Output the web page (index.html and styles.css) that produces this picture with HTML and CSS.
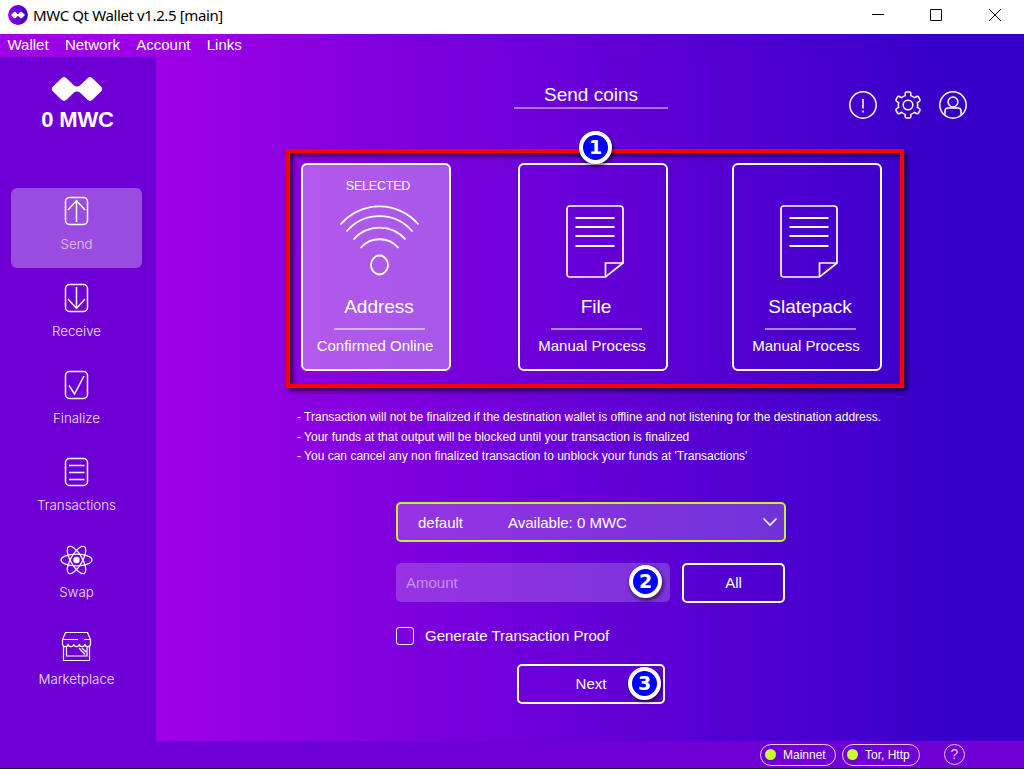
FILE: index.html
```html
<!DOCTYPE html>
<html lang="en">
<head>
<meta charset="utf-8">
<title>MWC Qt Wallet</title>
<link rel="stylesheet" href="styles.css">
</head>
<body>
<svg class="defs" width="0" height="0" aria-hidden="true">
  <defs>
    <linearGradient id="brand" x1="0" x2="1"><stop offset="0" stop-color="#9700e4"/><stop offset="1" stop-color="#3600c9"/></linearGradient>
    <symbol id="doc" viewBox="0 0 58 73">
      <path d="M4 1h50q3 0 3 3v54L39.500 72H4q-3 0-3-3V4q0-3 3-3z" stroke-width="1.700"/>
      <path d="M39.500 71V58H57" stroke-width="1.700"/>
      <path d="M9.500 13h39M9.500 22h39M9.500 31h39M9.500 41h39" stroke-width="1.900"/>
    </symbol>
  </defs>
</svg>
<div class="window">
  <header class="titlebar">
    <svg class="app-icon" viewBox="0 0 20 20" width="20" height="20"><circle cx="10" cy="10" r="9.900" fill="url(#brand)"/><path d="M3 10l3-3q.8-.7 1.600 0L10 9.200l2.400-2.200q.8-.7 1.600 0l3 3-3 3q-.8.700-1.600 0L10 10.800 7.600 13q-.8.700-1.600 0z" fill="#fff"/></svg>
    <span class="window-title">MWC Qt Wallet v1.2.5 [main]</span>
    <svg class="window-controls" viewBox="0 0 130 14" width="130" height="14"><path d="M0 6.500h12M58.500 1.500h11v11h-11zM117 1l12 12M129 1l-12 12"/></svg>
  </header>
  <nav class="menubar"><span>Wallet</span><span>Network</span><span>Account</span><span>Links</span></nav>
  <div class="body">
    <aside class="sidebar">
      <svg class="logo" viewBox="0 0 52 26" width="52" height="26"><path d="M1.500 11L10.500 2.200Q13 0 15.500 2.200L23 9.500Q26 11.500 29 9.500L36.500 2.200Q39 0 41.500 2.200L50.500 11Q52 13 50.500 15L41.500 23.800Q39 26 36.500 23.800L29 16.500Q26 14.500 23 16.500L15.500 23.800Q13 26 10.500 23.800L1.500 15Q0 13 1.500 11z" fill="#fff"/></svg>
      <div class="balance">0 MWC</div>
      <div class="nav">
        <div class="nav-item active">
          <svg viewBox="0 0 34 32" width="34" height="32"><rect x="5.500" y="2.500" width="22" height="27" rx="4"/><path d="M16.500 27V6M8 15l8.500-9.500L25 15"/></svg>
          <span class="label">Send</span>
        </div>
        <div class="nav-item">
          <svg viewBox="0 0 34 32" width="34" height="32"><rect x="5.500" y="2.500" width="22" height="27" rx="4"/><path d="M16.500 5v21M8 17l8.500 9.500L25 17"/></svg>
          <span class="label">Receive</span>
        </div>
        <div class="nav-item">
          <svg viewBox="0 0 34 32" width="34" height="32"><rect x="5.500" y="2.500" width="22" height="27" rx="4"/><path d="M9 16.500l5.500 8.500L24 7"/></svg>
          <span class="label">Finalize</span>
        </div>
        <div class="nav-item">
          <svg viewBox="0 0 34 32" width="34" height="32"><rect x="5.500" y="2.500" width="22" height="27" rx="4"/><path d="M9 9.500h15.500M9 16.500h15.500M9 23.500h15.500"/></svg>
          <span class="label">Transactions</span>
        </div>
        <div class="nav-item">
          <svg class="atom" viewBox="0 0 34 32" width="34" height="32"><g transform="translate(16.500 17)"><ellipse rx="15.500" ry="5.800"/><ellipse rx="15.500" ry="5.800" transform="rotate(60)"/><ellipse rx="15.500" ry="5.800" transform="rotate(120)"/><circle r="3.200" fill="#fff" stroke="none"/></g></svg>
          <span class="label">Swap</span>
        </div>
        <div class="nav-item">
          <svg class="shop" viewBox="0 0 34 32" width="34" height="32"><path d="M5.500 2.500h22l3 7v4.500a2.800 2.600 0 0 1-5.600 0a2.800 2.600 0 0 1-5.600 0a2.800 2.600 0 0 1-5.600 0a2.800 2.600 0 0 1-5.600 0a2.800 2.600 0 0 1-5.600 0V9.500zM2.500 9.500H18M24 9.500h6.500M3.500 16.500v14h26v-14M6.500 17v9h20.500v-9M19 18l6 6.500M22 18l4 4"/></svg>
          <span class="label">Marketplace</span>
        </div>
      </div>
    </aside>
    <main class="content">
      <div class="page-head">
        <h1 class="page-title">Send coins</h1>
        <div class="tools">
          <svg viewBox="0 0 28 28" width="28" height="28"><circle cx="14" cy="14" r="13.200"/><path d="M14 8v9.500M14 19.500v2" stroke-width="1.500"/></svg>
          <svg viewBox="0 0 28 28" width="28" height="28"><circle cx="14" cy="14" r="4.800"/><path d="M11.200 4.600V2.300q0-1.300 1.300-1.300h3q1.300 0 1.300 1.300v2.300q2 .6 3.700 2.100l2.100-1.200q1.200-.6 1.900.5l1.400 2.400q.6 1.200-.5 1.900l-2 1.200q.5 2.500 0 5l2 1.200q1.100.7.500 1.900l-1.400 2.400q-.7 1.100-1.900.5l-2.100-1.200q-1.700 1.500-3.700 2.100v2.300q0 1.300-1.300 1.300h-3q-1.300 0-1.300-1.300v-2.300q-2-.6-3.700-2.100l-2.100 1.200q-1.200.6-1.900-.5l-1.400-2.400q-.6-1.200.5-1.900l2-1.200q-.5-2.500 0-5l-2-1.200q-1.100-.7-.5-1.900L3.500 6q.7-1.100 1.900-.5l2.100 1.200q1.700-1.500 3.700-2.100z"/></svg>
          <svg viewBox="0 0 28 28" width="28" height="28"><circle cx="14" cy="14" r="13.200"/><circle cx="14" cy="11" r="4.900"/><path d="M6 23.500V20q0-3 3-3h10q3 0 3 3v3.500"/></svg>
        </div>
      </div>
      <section class="methods">
        <span class="badge badge-one">1</span>
        <article class="card selected">
          <div class="state">SELECTED</div>
          <svg class="card-icon" viewBox="0 0 80 73" width="80" height="73"><path d="M1.500 19.500A51 51 0 0 1 79.500 19.500M7.500 26.500A43 43 0 0 1 73.500 26.500M14.500 34.500A34.500 34.500 0 0 1 66.500 34.500M21.500 43A25 25 0 0 1 59.500 43"/><ellipse cx="40.500" cy="60" rx="8.500" ry="9.500"/></svg>
          <h2 class="card-name">Address</h2>
          <div class="card-note">Confirmed Online</div>
        </article>
        <article class="card">
          <div class="state"></div>
          <svg class="card-icon doc" width="58" height="73"><use href="#doc"/></svg>
          <h2 class="card-name">File</h2>
          <div class="card-note">Manual Process</div>
        </article>
        <article class="card">
          <div class="state"></div>
          <svg class="card-icon doc" width="58" height="73"><use href="#doc"/></svg>
          <h2 class="card-name">Slatepack</h2>
          <div class="card-note">Manual Process</div>
        </article>
      </section>
      <div class="hints">
        <p>- Transaction will not be finalized if the destination wallet is offline and not listening for the destination address.</p>
        <p>- Your funds at that output will be blocked until your transaction is finalized</p>
        <p>- You can cancel any non finalized transaction to unblock your funds at 'Transactions'</p>
      </div>
      <form class="form">
        <div class="account"><span class="account-name">default</span><span>Available: 0 MWC</span>
          <svg viewBox="0 0 16 10" width="16" height="10"><path d="M1.500 1.500L8 8l6.500-6.500"/></svg>
        </div>
        <div class="amount-row">
          <div class="amount">Amount<span class="badge badge-two">2</span></div>
          <div class="button all">All</div>
        </div>
        <div class="proof"><span class="checkbox"></span>Generate Transaction Proof</div>
        <div class="button next">Next<span class="badge badge-three">3</span></div>
      </form>
    </main>
  </div>
  <footer class="statusbar">
    <span class="pill mainnet"><i class="dot"></i>Mainnet</span>
    <span class="pill tor"><i class="dot"></i>Tor, Http</span>
    <span class="help">?</span>
  </footer>
</div>
</body>
</html>
```

FILE: styles.css
```css
* { box-sizing: border-box; }
body { margin: 0; overflow: hidden; font-family: "Liberation Sans", Arial, sans-serif; font-size: 15px; color: #fff; }
.defs { position: absolute; }
.window { width: 1024px; height: 769px; display: flex; flex-direction: column; background: #6e00d5; border-bottom: 1px solid #201c28; }
svg { fill: none; stroke: #fff; stroke-width: 1.500; flex: none; display: block; }

.titlebar { height: 34px; flex: none; display: flex; align-items: center; padding: 0 22px 4px 8px; background: #fff; color: #000; }
.app-icon, .logo { stroke: none; }
.window-title { flex: 1; margin: 0 0 0 5px; font: 15px/20px "Noto Sans", sans-serif; letter-spacing: -0.380px; }
.window-controls { stroke: #000; stroke-width: 1; }

.menubar { height: 23px; flex: none; display: flex; gap: 16.300px; padding: 0 7.500px; line-height: 22px; background: linear-gradient(90deg, #9f00e7, #9d00e6 17%, #3600c9 92%); }

.body { flex: 1; min-height: 0; display: flex; }
.sidebar { width: 156px; flex: none; display: flex; flex-direction: column; }
.logo { margin: 19px 0 0 51px; }
.balance { width: 155px; margin-top: 5px; text-align: center; font-size: 22px; line-height: 26px; font-weight: bold; letter-spacing: -0.200px; }
.nav { display: flex; flex-direction: column; gap: 7px; margin: 55px 14px 0 11px; }
.nav-item { height: 80px; display: flex; flex-direction: column; align-items: center; padding: 7px 0 0; border-radius: 6px; }
.nav-item.active { background: #9b4ce0; }
.label { margin-top: 7px; font: 300 13.300px/20px Inter, sans-serif; color: #f1e4fc; white-space: nowrap; }
.active .label { color: #e3c9f8; }
.atom { stroke-width: 1.200; }
.shop { stroke-width: 1.200; }

.content { flex: 1; background: linear-gradient(90deg, #9f00e7, #3600c9 92%, #3600c9); }
.page-head { height: 92px; display: grid; grid-template-columns: 358px 154px 1fr; }
.page-title { grid-column: 2; height: 52px; margin: 0; padding-top: 26px; border-bottom: 2px solid #ab75e6; text-align: center; font-size: 19px; line-height: 24px; font-weight: normal; }
.tools { justify-self: end; display: flex; gap: 17px; margin: 34px 57px 0 0; }

.methods { position: relative; width: 618px; height: 239px; margin-left: 130px; padding: 10px 18px 13px 11px; display: flex; justify-content: space-between; border: 4px solid #f00; box-shadow: 3px 3px 5px rgba(0,0,0,.65), inset 3px 3px 5px rgba(0,0,0,.65); }
.card { width: 150px; height: 208px; border: 2px solid #fff; border-radius: 6px; display: flex; flex-direction: column; align-items: center; padding: 13px 0 0 6px; }
.card:nth-of-type(2) { margin-left: 3px; }
.card.selected { background: rgba(255,255,255,.35); }
.state { height: 17px; font-size: 12.500px; line-height: 17px; margin-left: -2px; letter-spacing: -0.200px; }
.card-icon { margin-top: 10px; stroke-width: 1.800; }
.card-icon.doc { margin-right: 3px; }
.card-name { width: 91px; height: 38px; margin: 14px 0 0; padding-top: 5px; line-height: 20px; border-bottom: 2px solid rgba(255,255,255,.52); text-align: center; font-size: 19px; font-weight: normal; }
.card-note { margin: 7px 8px 0 0; line-height: 18px; white-space: nowrap; }

.hints { margin: 20px 0 0 141px; font-size: 12px; line-height: 19.500px; white-space: nowrap; }
.hints p { margin: 0; }
.form { width: 390px; margin: 35px 0 0 240px; }
.account { height: 40px; display: flex; align-items: center; padding: 1px 6px 0 20px; border: 2px solid #c3ef3c; border-radius: 5px; background: rgba(255,255,255,.2); }
.account-name { width: 90px; }
.account svg { margin-left: auto; stroke-width: 1.600; }
.amount-row { display: flex; gap: 12px; margin-top: 21px; }
.amount { position: relative; width: 274px; height: 39px; padding-left: 10px; line-height: 39px; border-radius: 5px; background: rgba(255,255,255,.2); color: #c594ef; }
.button { position: relative; height: 40px; border: 2px solid #fff; border-radius: 5px; text-align: center; line-height: 36px; }
.all { width: 103px; }
.proof { display: flex; align-items: center; gap: 11px; height: 18px; margin-top: 24px; }
.checkbox { width: 18px; height: 18px; border: 1.500px solid #fff; border-radius: 3px; }
.next { width: 148px; margin: 19px 0 0 121px; }

.badge { position: absolute; width: 33px; height: 33px; border: 4px solid #fff; border-radius: 50%; background: #00f; color: #fff; box-shadow: 1px 2px 4px rgba(0,0,0,.7); font: bold 19px/25px "DejaVu Sans", sans-serif; text-align: center; }
.badge-one { left: 289px; top: -22px; }
.badge-two { right: 8px; top: 2px; }
.badge-three { right: 2px; top: 1px; }

.statusbar { height: 27px; flex: none; display: flex; align-items: center; padding-left: 760px; font-size: 12px; }
.pill { height: 22px; display: flex; align-items: center; padding-left: 4px; gap: 7px; border: 1px solid #e2c8f8; border-radius: 11px; white-space: nowrap; }
.mainnet { width: 76px; }
.tor { width: 78px; margin-left: 6px; }
.dot { width: 11px; height: 11px; border-radius: 50%; background: #c8ff2f; }
.help { width: 21px; height: 21px; margin-left: 24px; border: 1px solid #e2c8f8; border-radius: 50%; text-align: center; font-size: 14px; line-height: 19px; color: #e2c8f8; }
```
